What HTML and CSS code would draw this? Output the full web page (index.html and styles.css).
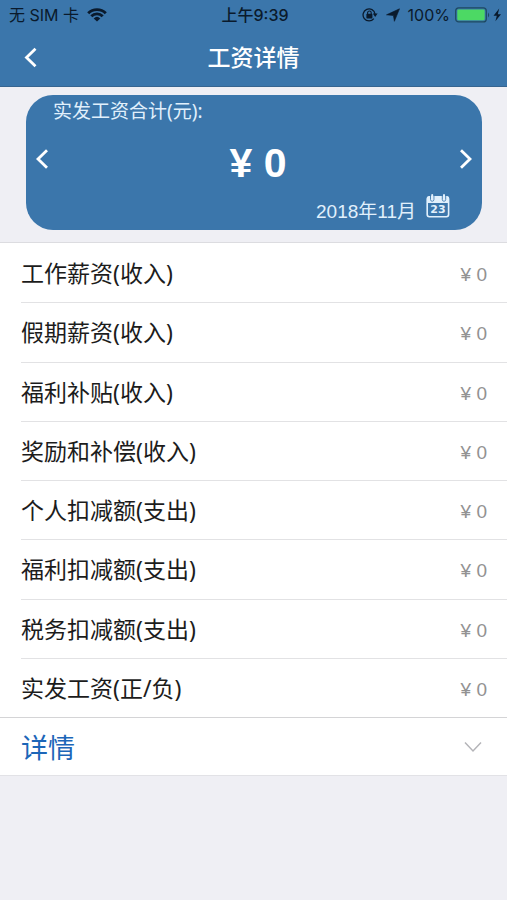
FILE: index.html
```html
<!DOCTYPE html>
<html lang="zh-CN">
<head>
<meta charset="utf-8">
<meta name="viewport" content="width=device-width, initial-scale=1">
<title>工资详情</title>
<link rel="stylesheet" href="styles.css">
</head>
<body>
<header class="top">
  <div class="status">
    <div class="status-side">
      <span>无 SIM 卡</span>
      <svg class="wifi" width="20" height="14" viewBox="0 0 20 14" aria-hidden="true">
        <path d="M1.2 5.2a12.6 12.6 0 0 1 17.6 0M4.3 8.2a8.2 8.2 0 0 1 11.4 0" fill="none" stroke="currentColor" stroke-width="2.9"/>
        <path d="M10 13.6 6.7 10.4a4.8 4.8 0 0 1 6.6 0z" fill="currentColor"/>
      </svg>
    </div>
    <time class="clock">上午9:39</time>
    <div class="status-side status-end">
      <svg width="16" height="16" viewBox="0 0 16 16" aria-hidden="true">
        <path d="M11.800 11.600A6 6 0 1 1 13 7" fill="none" stroke="currentColor" stroke-width="1.3"/>
        <path d="M10.800 6.600h4.800l-2.400 3.400z" fill="currentColor"/>
        <rect x="4.400" y="6.800" width="6" height="4.600" rx=".6" fill="currentColor"/>
        <path d="M5.600 7V5.800a1.800 1.800 0 0 1 3.600 0V7" fill="none" stroke="currentColor" stroke-width="1.1"/>
      </svg>
      <svg class="locate" width="14" height="14" viewBox="0 0 14 14" aria-hidden="true"><path d="M13.500.8 8.400 13.300 7.400 7.600.5 6.800z" fill="currentColor" stroke="currentColor" stroke-width=".6" stroke-linejoin="round"/></svg>
      <span>100%</span>
      <svg class="battery" width="46" height="16" viewBox="0 0 46 16" aria-hidden="true">
        <rect x=".7" y=".9" width="30.6" height="14" rx="3" fill="none" stroke="#1e4a61" stroke-width="1.2"/>
        <rect x="2.3" y="2.5" width="27.4" height="10.8" rx="1.3" fill="#4cd964"/>
        <path d="M33 5.4q2.4 2.4 0 5z" fill="#1e4a61"/>
        <path d="M44.200 1.500 38.500 8.800h3.300L40.400 14.300 46 7.200h-3.200z" fill="currentColor"/>
      </svg>
    </div>
  </div>
  <nav class="navbar">
    <button class="icon-button" type="button" aria-label="返回">
      <svg width="14" height="22" viewBox="0 0 14 22"><path d="M12.500 1.800 3.500 10.500l9 8.700" fill="none" stroke="currentColor" stroke-width="2.8"/></svg>
    </button>
    <h1 class="title">工资详情</h1>
  </nav>
</header>
<main>
  <section class="summary">
    <div class="card">
      <h2 class="card-label">实发工资合计(元):</h2>
      <div class="total-row">
        <button class="icon-button" type="button" aria-label="上个月">
          <svg width="14" height="20" viewBox="0 0 14 20"><path d="M12 1.2 3 10l9 8.8" fill="none" stroke="currentColor" stroke-width="2.8"/></svg>
        </button>
        <strong class="total">¥ 0</strong>
        <button class="icon-button" type="button" aria-label="下个月">
          <svg width="14" height="20" viewBox="0 0 14 20"><path d="M2 1.2 11 10l-9 8.800" fill="none" stroke="currentColor" stroke-width="2.8"/></svg>
        </button>
      </div>
      <button class="month" type="button">
        <span>2018年11月</span>
        <svg width="24" height="24" viewBox="0 0 24 24" aria-hidden="true">
          <rect x="1.2" y="3" width="21.4" height="19.8" rx="2.2" fill="none" stroke="currentColor" stroke-width="1.6"/>
          <path d="M1 9V4.400A2.400 2.400 0 0 1 3.400 2h17A2.400 2.400 0 0 1 23 4.400V9z" fill="currentColor"/>
          <path d="M4.500 2v3.500a1.700 1.700 0 0 0 3.400 0V2M16.300 2v3.500a1.700 1.700 0 0 0 3.400 0V2" fill="none" stroke="#3b76ab" stroke-width=".9"/>
          <path d="M6.200 1v4.500M18 1v4.500" stroke="currentColor" stroke-width="2" stroke-linecap="round"/>
          <text class="cal-day" x="12" y="19" text-anchor="middle">23</text>
        </svg>
      </button>
    </div>
  </section>
  <dl class="items">
    <div class="item"><dt>工作薪资(收入)</dt><dd>¥ 0</dd></div>
    <div class="item"><dt>假期薪资(收入)</dt><dd>¥ 0</dd></div>
    <div class="item"><dt>福利补贴(收入)</dt><dd>¥ 0</dd></div>
    <div class="item"><dt>奖励和补偿(收入)</dt><dd>¥ 0</dd></div>
    <div class="item"><dt>个人扣减额(支出)</dt><dd>¥ 0</dd></div>
    <div class="item"><dt>福利扣减额(支出)</dt><dd>¥ 0</dd></div>
    <div class="item"><dt>税务扣减额(支出)</dt><dd>¥ 0</dd></div>
    <div class="item"><dt>实发工资(正/负)</dt><dd>¥ 0</dd></div>
  </dl>
  <button class="details" type="button" aria-expanded="false">
    <span>详情</span>
    <svg width="18" height="12" viewBox="0 0 18 12" aria-hidden="true"><path d="M1 1.500 9 10l8-8.500" fill="none" stroke="currentColor" stroke-width="1.500"/></svg>
  </button>
</main>
</body>
</html>
```
FILE: styles.css
```css
* {
  box-sizing: border-box;
}

body {
  margin: 0;
  min-height: 100vh;
  background: #efeff4;
  color: #1c1c1c;
  font-family: "Liberation Sans", "Noto Sans CJK SC", sans-serif;
}

button {
  padding: 0;
  border: 0;
  background: none;
  color: inherit;
  font: inherit;
  cursor: pointer;
}

svg {
  display: block;
}

.top {
  background: #3b76ab;
  border-bottom: 1px solid #376590;
}

.status {
  display: grid;
  grid-template-columns: 1fr auto 1fr;
  align-items: center;
  height: 30px;
  padding: 0 6px 0 9px;
  color: #0a1a2c;
  font-family: Inter, "Noto Sans CJK SC", sans-serif;
  font-size: 16px;
  line-height: 30px;
}

.status-side {
  display: flex;
  align-items: center;
  gap: 8px;
}

.status-end {
  justify-content: flex-end;
}

.battery {
  margin-left: -3px;
}

.clock {
  font-weight: 500;
}

.navbar {
  display: grid;
  grid-template-columns: 32px 1fr 32px;
  align-items: center;
  height: 56px;
  padding: 0 14px;
  color: #fff;
}

.icon-button {
  display: grid;
  place-items: center;
  width: 32px;
  height: 40px;
}

.title {
  margin: 0;
  font-size: 23px;
  font-weight: 500;
  line-height: 32px;
  text-align: center;
}

.summary {
  padding: 8px 25px 12px 26px;
  border-bottom: 1px solid #dcdce0;
}

.card {
  display: flex;
  flex-direction: column;
  min-height: 135px;
  border-radius: 27px;
  background: #3b76ab;
  color: #fff;
}

.card-label {
  margin: 0;
  padding: 0 27px;
  color: #e1f0fc;
  font-family: "Noto Sans", "Noto Sans CJK SC", sans-serif;
  font-size: 19px;
  font-weight: 400;
  line-height: 32px;
}

.total-row {
  display: flex;
  align-items: center;
  justify-content: space-between;
  height: 64px;
}

.total {
  padding: 8px 0 0 8px;
  font-size: 41px;
  line-height: 64px;
}

.month {
  display: flex;
  align-items: flex-end;
  align-self: flex-end;
  gap: 10px;
  margin-right: 32px;
  color: #e1f0fc;
  font-size: 19px;
  line-height: 24px;
}

.month span {
  padding-top: 9px;
}

.month svg {
  margin-bottom: 6px;
}

.cal-day {
  fill: currentColor;
  font-family: "DejaVu Sans", sans-serif;
  font-size: 11px;
  font-weight: 700;
}

.items {
  display: grid;
  grid-auto-rows: 1fr;
  min-height: 475px;
  margin: 0;
  padding-left: 21px;
  border-bottom: 1px solid #d4d4d6;
  background: #fff;
}

.item {
  display: flex;
  align-items: center;
  justify-content: space-between;
  padding-right: 20px;
  font-size: 23px;
  line-height: 32px;
}

.item dt {
  font-family: "Noto Sans", "Noto Sans CJK SC", sans-serif;
}

.item + .item {
  border-top: 1px solid #e2e2e4;
}

.item dd {
  margin: 0;
  padding-top: 4px;
  color: #929292;
  font-size: 19px;
}

.details {
  display: flex;
  align-items: center;
  justify-content: space-between;
  width: 100%;
  height: 58px;
  padding: 0 25px 0 21px;
  border-bottom: 1px solid #e2e2e6;
  background: #fff;
  color: #b4b4b8;
}

.details span {
  padding-top: 4px;
  color: #1c66b8;
  font-size: 27px;
  line-height: 40px;
}
```
